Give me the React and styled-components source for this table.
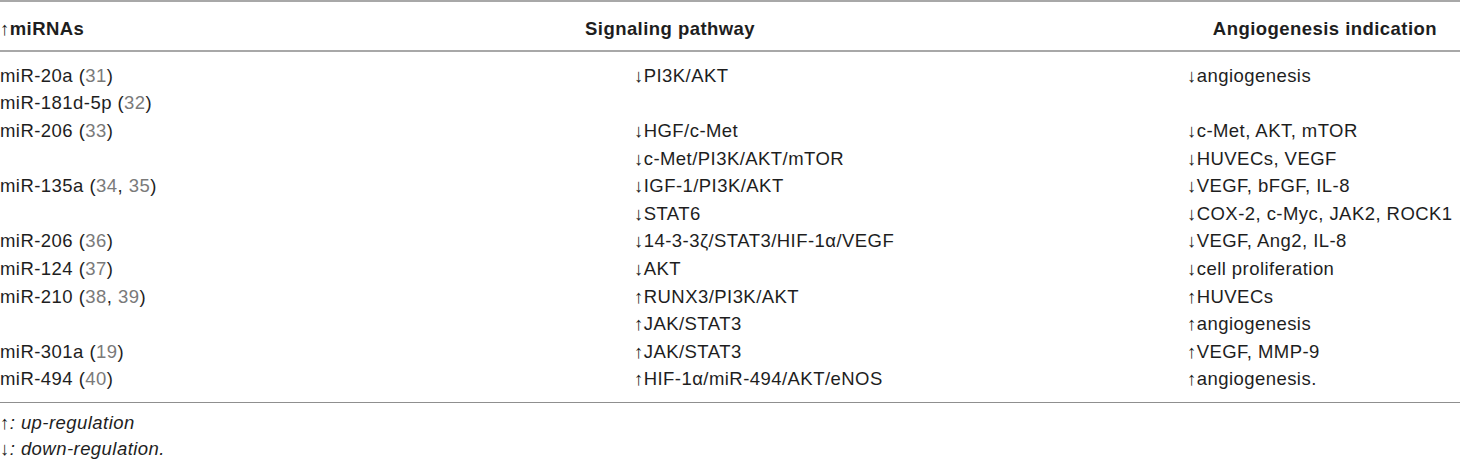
import styled, { createGlobalStyle } from "styled-components";

const GlobalStyle = createGlobalStyle`
    body {
        margin: 0;
        background: #ffffff;
        font-family: "Liberation Sans", Arial, sans-serif;
        color: #1e1e1e;
    }
`;

const Tabela = styled.div`
    width: 1460px;
    font-size: 18.5px;
    letter-spacing: 0.45px;
`;

const Cabecalho = styled.div`
    display: grid;
    grid-template-columns: 585px 1fr auto;
    align-items: center;
    box-sizing: border-box;
    height: 52px;
    padding: 6px 23px 0 0;
    border-top: 2px solid #a8a8a8;
    border-bottom: 2px solid #a8a8a8;
    font-weight: 700;
`;

const Corpo = styled.div`
    display: grid;
    grid-template-columns: 634px 553px 1fr;
    grid-auto-rows: 27.6px;
    align-items: center;
    padding: 10px 0 9px 0;
    border-bottom: 1px solid #8f8f8f;
`;

const Celula = styled.div`
    white-space: nowrap;
`;

const Ref = styled.span`
    color: #7a7a7a;
`;

const Notas = styled.div`
    display: flex;
    flex-direction: column;
    padding-top: 7px;
    line-height: 26px;
`;

const Nota = styled.div`
    font-style: italic;
`;

const Seta = styled.span`
    font-style: normal;
`;

const linhas = [
    ["miR-20a", "31", "↓PI3K/AKT", "↓angiogenesis"],
    ["miR-181d-5p", "32", "", ""],
    ["miR-206", "33", "↓HGF/c-Met", "↓c-Met, AKT, mTOR"],
    ["", "", "↓c-Met/PI3K/AKT/mTOR", "↓HUVECs, VEGF"],
    ["miR-135a", "34, 35", "↓IGF-1/PI3K/AKT", "↓VEGF, bFGF, IL-8"],
    ["", "", "↓STAT6", "↓COX-2, c-Myc, JAK2, ROCK1"],
    ["miR-206", "36", "↓14-3-3ζ/STAT3/HIF-1α/VEGF", "↓VEGF, Ang2, IL-8"],
    ["miR-124", "37", "↓AKT", "↓cell proliferation"],
    ["miR-210", "38, 39", "↑RUNX3/PI3K/AKT", "↑HUVECs"],
    ["", "", "↑JAK/STAT3", "↑angiogenesis"],
    ["miR-301a", "19", "↑JAK/STAT3", "↑VEGF, MMP-9"],
    ["miR-494", "40", "↑HIF-1α/miR-494/AKT/eNOS", "↑angiogenesis."],
];

const renderRefs = (refs) =>
    refs.split(", ").map((r, i) => (
        <span key={r}>
            {i > 0 && ", "}
            <Ref>{r}</Ref>
        </span>
    ));

const App = () => {
    return (
        <>
            <GlobalStyle />
            <Tabela>
                <Cabecalho>
                    <Celula>↑miRNAs</Celula>
                    <Celula>Signaling pathway</Celula>
                    <Celula>Angiogenesis indication</Celula>
                </Cabecalho>
                <Corpo>
                    {linhas.map(([mirna, refs, via, indicacao], i) => (
                        <div key={i} style={{ display: "contents" }}>
                            <Celula>
                                {mirna && (
                                    <>
                                        {mirna} ({renderRefs(refs)})
                                    </>
                                )}
                            </Celula>
                            <Celula>{via}</Celula>
                            <Celula>{indicacao}</Celula>
                        </div>
                    ))}
                </Corpo>
                <Notas>
                    <Nota><Seta>↑</Seta>: up-regulation</Nota>
                    <Nota><Seta>↓</Seta>: down-regulation.</Nota>
                </Notas>
            </Tabela>
        </>
    );
};

export default App;
